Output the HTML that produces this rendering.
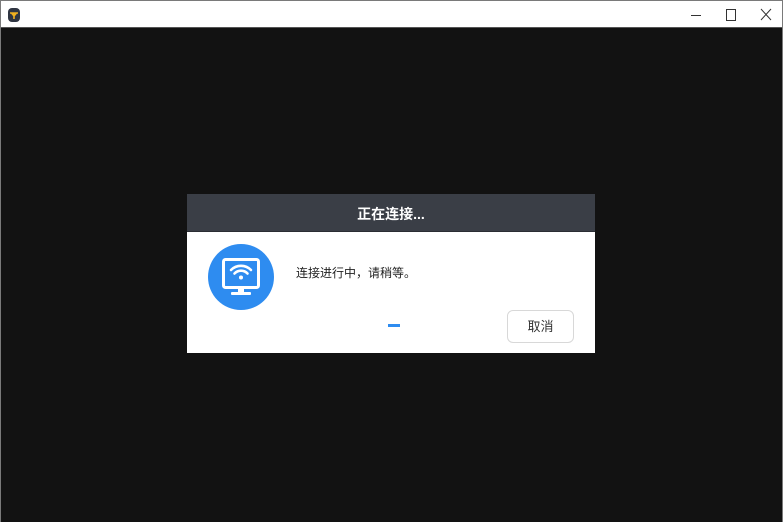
<!DOCTYPE html>
<html><head><meta charset="utf-8"><style>
*{margin:0;padding:0;box-sizing:border-box}
body{width:783px;height:522px;overflow:hidden;background:#fff;font-family:"Liberation Sans","Noto Sans CJK SC",sans-serif}
.win{position:absolute;left:0;top:0;width:783px;height:522px;border:1px solid #7a7a7a}
.title{position:absolute;left:0;top:0;width:781px;height:27px;background:#fff;border-bottom:1px solid #555}
.body{position:absolute;left:0;top:27px;width:781px;height:494px;background:#121212}
.dlg{position:absolute;left:186px;top:193px;width:408px;height:159px;background:#fff}
.hd{height:38px;background:#3a3e46;color:#fff;font-weight:bold;font-size:14px;text-align:center;line-height:40px;border-bottom:1px solid #2a2d33}
.msg{position:absolute;left:109px;top:70px;font-size:12px;color:#222}
.btn{position:absolute;left:320px;top:116px;width:67px;height:33px;border:1px solid #d8d8d8;border-radius:6px;font-size:13px;color:#333;text-align:center;line-height:31px}
.dash{position:absolute;left:201px;top:130px;width:12px;height:3px;background:#2e8cf0}
</style></head><body>
<div class="win">
<div class="title">
<svg style="position:absolute;left:6px;top:6px" width="14" height="16" viewBox="0 0 14 16"><rect x="1" y="1" width="12" height="14" rx="4" fill="#2f3542"/><path d="M3 6h8M7 6v6M4.5 6l2.5 3 2.5-3" stroke="#f0b020" stroke-width="1.6" fill="none"/></svg>
<svg style="position:absolute;left:688px;top:6px" width="90" height="16" viewBox="0 0 90 16"><path d="M2 8.5h10" stroke="#333" stroke-width="1"/><rect x="37.5" y="2.5" width="9" height="11" fill="none" stroke="#333"/><path d="M72 2l10 11M82 2l-10 11" stroke="#333" stroke-width="1"/></svg>
</div>
<div class="body"></div>
<div class="dlg">
<div class="hd">正在连接...</div>
<svg style="position:absolute;left:21px;top:50px" width="66" height="66" viewBox="0 0 66 66"><circle cx="33" cy="33" r="33" fill="#2e8cf0"/>
<rect x="15.5" y="15.5" width="35" height="28" rx="2" fill="none" stroke="#fff" stroke-width="3"/>
<rect x="30" y="44" width="6" height="5" fill="#fff"/>
<rect x="23" y="48" width="20" height="3" rx="1" fill="#fff"/>
<path d="M23 26a14 14 0 0 1 20 0M26.5 29.5a9 9 0 0 1 13 0" stroke="#fff" stroke-width="2.6" fill="none" stroke-linecap="round"/>
<circle cx="33" cy="33.5" r="2" fill="#fff"/></svg>
<div class="msg">连接进行中，请稍等。</div>
<div class="dash"></div>
<div class="btn">取消</div>
</div>
</div>
</body></html>
